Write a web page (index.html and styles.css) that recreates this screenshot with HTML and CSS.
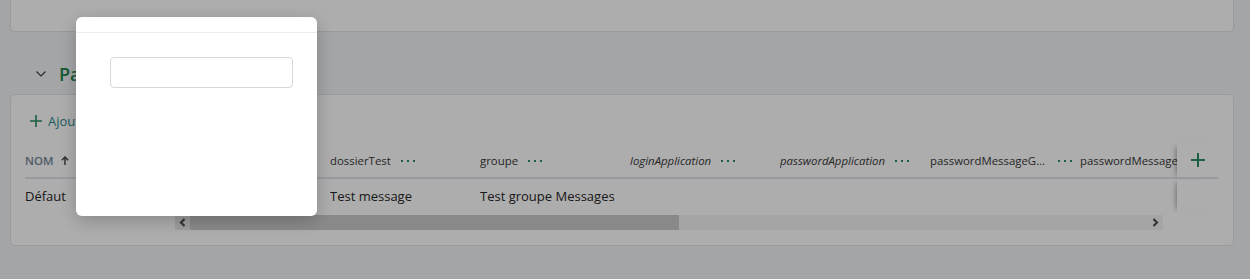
FILE: index.html
```html
<!DOCTYPE html>
<html lang="fr">
<head>
<meta charset="utf-8">
<title>Paramètres</title>
<link rel="stylesheet" href="styles.css">
</head>
<body>
<div class="page">
  <div class="card card-top"></div>

  <div class="section-head">
    <svg class="chevron" width="10" height="6" viewBox="0 0 10 6"><polyline points="0.5,0.5 5,5 9.5,0.5" fill="none" stroke="#3a3a3a" stroke-width="1.1"/></svg>
    <h2 class="section-title">Paramètres</h2>
  </div>

  <div class="card card-main">
    <div class="toolbar">
      <button class="add-btn" type="button">
        <svg width="12" height="12" viewBox="0 0 12 12"><path d="M6 0v12M0 6h12" stroke="currentColor" stroke-width="1.6" fill="none"/></svg>
        <span class="add-label">Ajouter</span>
      </button>
    </div>

    <div class="grid">
      <div class="col-frozen">
        <div class="th th-nom">NOM
          <svg class="sort" width="8" height="9" viewBox="0 0 8 9"><path d="M4 9V1M0.8 4.2L4 1l3.2 3.2" stroke="currentColor" stroke-width="1.5" fill="none"/></svg>
        </div>
        <div class="td">Défaut</div>
      </div>

      <div class="col-scroll">
        <div class="scroll-inner">
          <div class="row">
            <div class="th c-first"><span class="lbl">description</span><span class="dots"></span></div>
            <div class="th c"><span class="lbl">dossierTest</span><span class="dots"></span></div>
            <div class="th c"><span class="lbl">groupe</span><span class="dots"></span></div>
            <div class="th c"><span class="lbl it">loginApplication</span><span class="dots"></span></div>
            <div class="th c"><span class="lbl it">passwordApplication</span><span class="dots"></span></div>
            <div class="th c"><span class="lbl">passwordMessageGroupe</span><span class="dots"></span></div>
            <div class="th c"><span class="lbl">passwordMessageGeneral</span><span class="dots"></span></div>
          </div>
          <div class="row">
            <div class="td c-first"></div>
            <div class="td c">Test message</div>
            <div class="td c">Test groupe Messages</div>
            <div class="td c"></div>
            <div class="td c"></div>
            <div class="td c"></div>
            <div class="td c"></div>
          </div>
        </div>
      </div>

      <div class="col-sticky">
        <div class="th th-add">
          <svg width="14" height="14" viewBox="0 0 14 14"><path d="M7 0v14M0 7h14" stroke="currentColor" stroke-width="2" fill="none"/></svg>
        </div>
        <div class="td td-sticky"></div>
      </div>
    </div>

    <div class="hscroll">
      <div class="hs-btn hs-left"><svg width="7" height="9" viewBox="0 0 7 9"><polyline points="5.5,1 2,4.5 5.5,8" fill="none" stroke="currentColor" stroke-width="2.2"/></svg></div>
      <div class="hs-track"><div class="hs-thumb"></div></div>
      <div class="hs-btn hs-right"><svg width="7" height="9" viewBox="0 0 7 9"><polyline points="1.5,1 5,4.5 1.5,8" fill="none" stroke="currentColor" stroke-width="2.2"/></svg></div>
    </div>
  </div>
</div>

<div class="overlay"></div>
<div class="modal">
  <div class="modal-head"></div>
  <div class="modal-body">
    <input class="modal-input" type="text" aria-label="Valeur">
  </div>
</div>
</body>
</html>
```

FILE: styles.css
```css
html, body {
  margin: 0;
  height: 279px;
  overflow: hidden;
}
body {
  background: #f1f3f6;
  font-family: "Open Sans", "Noto Sans", sans-serif;
  color: #262626;
}
.page {
  padding: 0 16px 0 10px;
}
.card {
  background: #fff;
  border: 1px solid #e0e3e7;
  border-radius: 4px;
  box-sizing: border-box;
}
.card-top {
  height: 42px;
  margin-top: -10px;
}
.section-head {
  display: flex;
  align-items: center;
  height: 38px;
  padding: 23px 0 1px 26px;
}
.chevron {
  flex: none;
  margin-right: 13px;
}
.section-title {
  margin: 0;
  font-size: 18px;
  font-weight: 600;
  color: #1e8449;
}
.card-main {
  padding: 10px 15px 15px 14px;
}
.toolbar {
  height: 32px;
  display: flex;
  align-items: center;
}
.add-btn {
  display: inline-flex;
  align-items: center;
  gap: 6px;
  height: 32px;
  padding: 0 5px;
  border: none;
  background: none;
  color: #2a8c5f;
  font-family: inherit;
  font-size: 13px;
}
.add-label {
  color: #2b8a8e;
}
.grid {
  display: flex;
  margin-top: 6px;
}
.col-frozen {
  width: 150px;
  flex: none;
}
.col-scroll {
  flex: 1;
  min-width: 0;
  overflow: hidden;
}
.scroll-inner {
  width: max-content;
}
.row {
  display: flex;
}
.col-sticky {
  width: 41px;
  flex: none;
  background: #fff;
}
.th {
  height: 34px;
  border-bottom: 2px solid #dfe5eb;
  display: flex;
  align-items: center;
  font-size: 11.4px;
  color: #383838;
  white-space: nowrap;
}
.td {
  height: 34px;
  display: flex;
  align-items: center;
  font-size: 13px;
  color: #262626;
  white-space: nowrap;
}
.c-first {
  width: 155px;
  flex: none;
}
.c {
  width: 150px;
  flex: none;
  overflow: hidden;
}
.lbl {
  max-width: 118px;
  overflow: hidden;
  text-overflow: ellipsis;
}
.it {
  font-style: italic;
}
.dots {
  flex: none;
  width: 2px;
  height: 2px;
  margin: 1px 12px 0 10px;
  background: #2a8c5f;
  box-shadow: 6px 0 0 #2a8c5f, 12px 0 0 #2a8c5f;
}
.th-nom {
  font-weight: 600;
  color: #76889a;
  gap: 8px;
}
.sort {
  color: #4a4a4a;
}
.th-add {
  justify-content: center;
  color: #2a8c5f;
  box-shadow: -5px 0 5px -4px rgba(0, 0, 0, 0.35);
}
.td-sticky {
  box-shadow: -5px 0 5px -4px rgba(0, 0, 0, 0.35);
}
.hscroll {
  display: flex;
  height: 15px;
  margin: 2px 55px 0 150px;
  background: #f4f4f4;
}
.hs-btn {
  width: 15px;
  flex: none;
  display: flex;
  align-items: center;
  justify-content: center;
  color: #4f4f4f;
}
.hs-left {
  background: #e8e8e8;
}
.hs-track {
  flex: 1;
  display: flex;
}
.hs-thumb {
  width: 489px;
  background: #cbcbcb;
}
.overlay {
  position: fixed;
  inset: 0;
  background: rgba(0, 0, 0, 0.32);
}
.modal {
  position: fixed;
  left: 76px;
  top: 17px;
  width: 241px;
  height: 199px;
  background: #fff;
  border-radius: 6px;
  box-shadow: 0 5px 18px rgba(0, 0, 0, 0.22);
}
.modal-head {
  height: 15px;
  border-bottom: 1px solid #ececec;
}
.modal-body {
  padding: 24px 24px 0 34px;
}
.modal-input {
  display: block;
  width: 183px;
  height: 31px;
  margin: 0;
  box-sizing: border-box;
  border: 1px solid #d8d8d8;
  border-radius: 4px;
  background: #fff;
}
```
